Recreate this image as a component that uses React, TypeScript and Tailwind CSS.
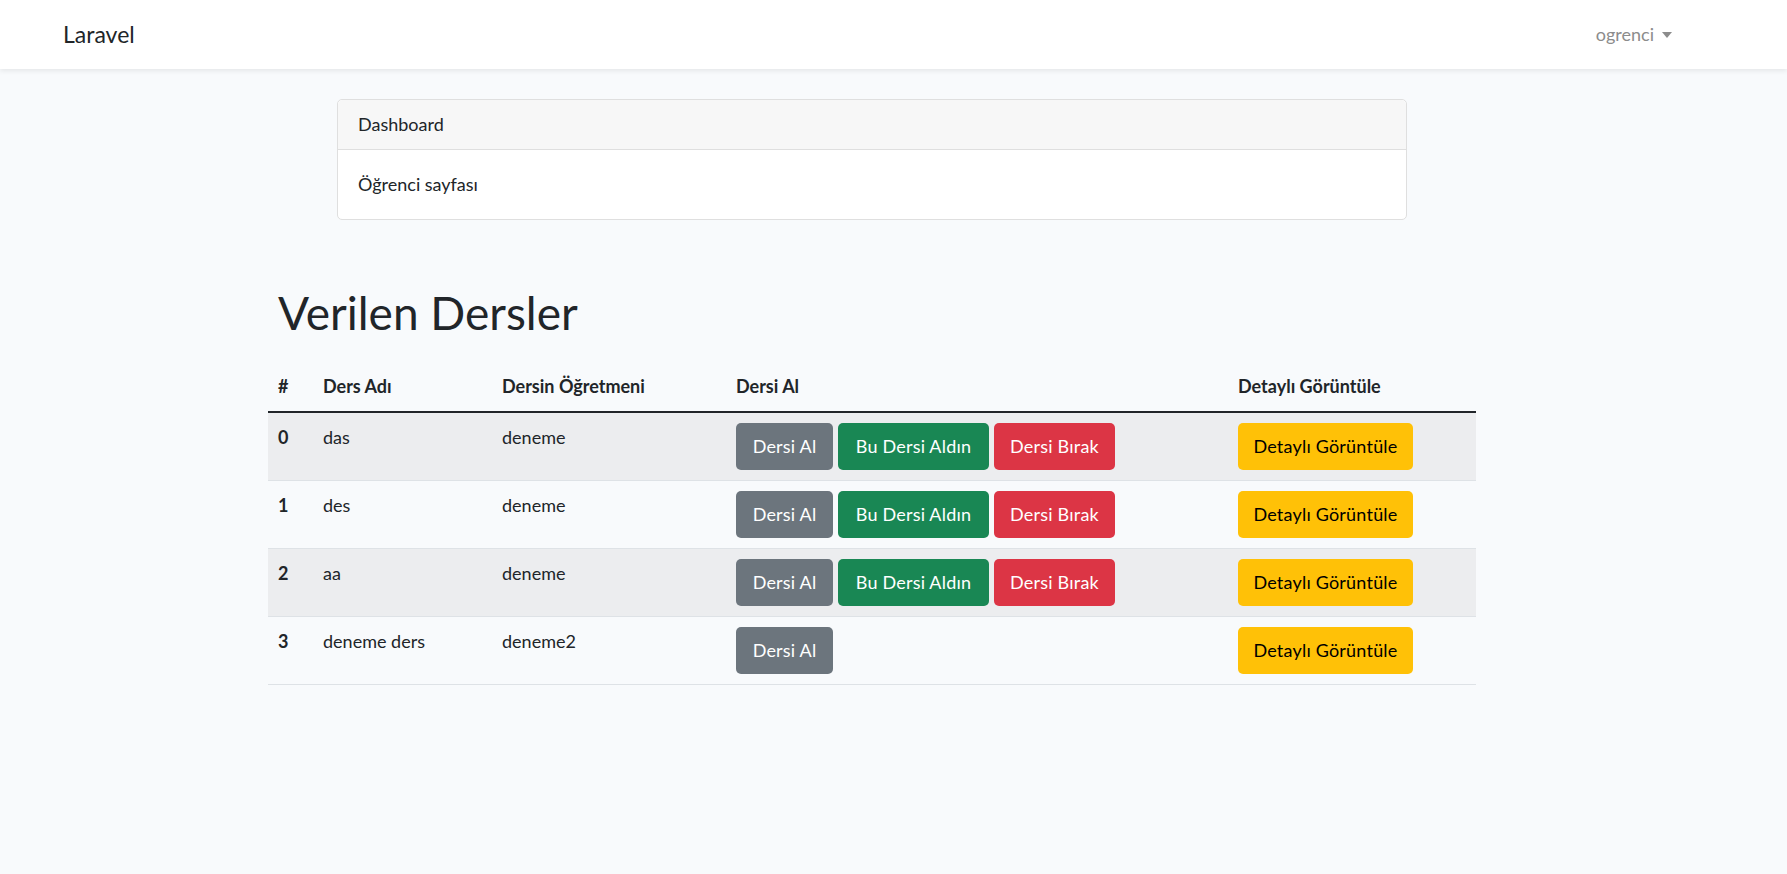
const dersler = [
  { id: 0, ad: "das", ogretmen: "deneme", alindi: true },
  { id: 1, ad: "des", ogretmen: "deneme", alindi: true },
  { id: 2, ad: "aa", ogretmen: "deneme", alindi: true },
  { id: 3, ad: "deneme ders", ogretmen: "deneme2", alindi: false },
];

const btn =
  "inline-block align-middle text-center rounded-[5px] border border-transparent py-[8px] text-[18px] leading-[29px] tracking-[0.2px]";

export default function App() {
  return (
    <div className="min-h-[874px] bg-[#f8fafc] text-[18px] leading-[29px] text-[#212529] font-['Lato',sans-serif]">
      {/* Navbar */}
      <nav className="h-[69px] bg-white shadow-[0_2px_5px_rgba(0,0,0,0.08)] flex items-center justify-between pl-[63px] pr-[115px]">
        <a className="text-[23px] text-[#212529]">Laravel</a>
        <div className="flex items-center gap-[8px] text-[#8c8c8c]">
          <span>ogrenci</span>
          <span className="w-0 h-0 border-l-[5px] border-r-[5px] border-t-[6px] border-l-transparent border-r-transparent border-t-[#8c8c8c]" />
        </div>
      </nav>

      {/* Dashboard card */}
      <div className="mt-[30px] ml-[337px] w-[1070px] rounded-[5px] border border-[#dfdfdf] bg-white">
        <div className="px-[20px] py-[10px] bg-[#f7f7f7] border-b border-[#dfdfdf] rounded-t-[5px]">
          Dashboard
        </div>
        <div className="p-[20px]">Öğrenci sayfası</div>
      </div>

      {/* Dersler */}
      <div className="ml-[268px] w-[1208px] mt-[63px]">
        <h1 className="text-[46px] leading-[60px] px-[10px] mb-[19px]">Verilen Dersler</h1>
        <table className="w-full table-fixed">
          <colgroup>
            <col className="w-[45px]" />
            <col className="w-[179px]" />
            <col className="w-[234px]" />
            <col className="w-[502px]" />
            <col />
          </colgroup>
          <thead>
            <tr className="border-b-2 border-[#212529] text-left font-bold">
              <th className="p-[10px]">#</th>
              <th className="p-[10px]">Ders Adı</th>
              <th className="p-[10px]">Dersin Öğretmeni</th>
              <th className="p-[10px]">Dersi Al</th>
              <th className="p-[10px]">Detaylı Görüntüle</th>
            </tr>
          </thead>
          <tbody>
            {dersler.map((d, i) => (
              <tr
                key={d.id}
                className={
                  i % 2 === 0
                    ? "bg-[#ecedef] border-b border-[#dee2e6] align-top"
                    : "border-b border-[#dee2e6] align-top"
                }
              >
                <td className="p-[10px] font-bold">{d.id}</td>
                <td className="p-[10px]">{d.ad}</td>
                <td className="p-[10px]">{d.ogretmen}</td>
                <td className="p-[10px]">
                  <div className="flex gap-[5px]">
                    <button className={btn + " w-[97px] bg-[#6c757d] text-white"}>Dersi Al</button>
                    {d.alindi && (
                      <>
                        <button className={btn + " w-[151px] bg-[#198754] text-white"}>Bu Dersi Aldın</button>
                        <button className={btn + " w-[121px] bg-[#dc3545] text-white"}>Dersi Bırak</button>
                      </>
                    )}
                  </div>
                </td>
                <td className="p-[10px]">
                  <button className={btn + " w-[175px] bg-[#ffc107] text-black"}>Detaylı Görüntüle</button>
                </td>
              </tr>
            ))}
          </tbody>
        </table>
      </div>
    </div>
  );
}
